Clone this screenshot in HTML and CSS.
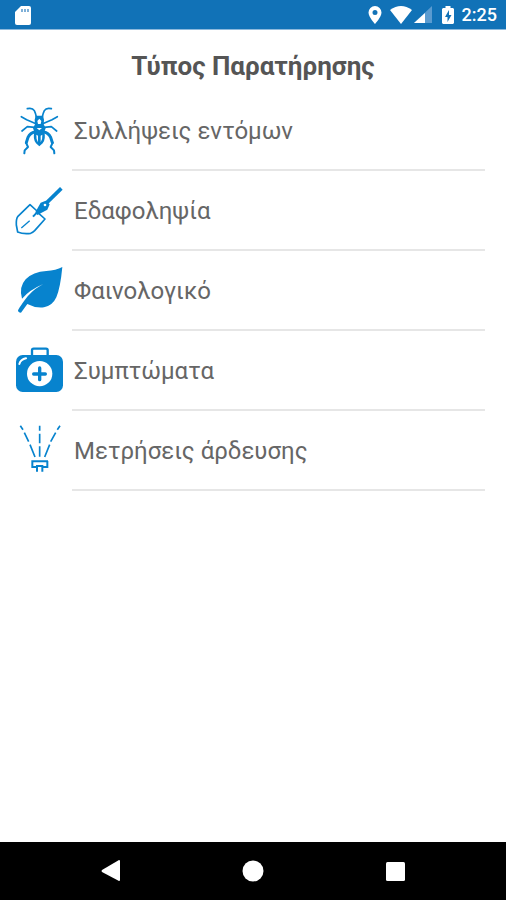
FILE: index.html
```html
<!DOCTYPE html>
<html lang="el">
<head>
<meta charset="utf-8">
<meta name="viewport" content="width=device-width, initial-scale=1">
<title>Τύπος Παρατήρησης</title>
<link rel="stylesheet" href="styles.css">
</head>
<body>
<header class="status">
  <svg class="sd" width="16" height="20" viewBox="0 0 16 20" aria-hidden="true"><path fill="#fff" d="M6 1h8a2 2 0 0 1 2 2v15a2 2 0 0 1-2 2H2a2 2 0 0 1-2-2V7z"/><path stroke="#7fb0d8" stroke-width="2" d="M7 4v3M10 4v3M13 4v3"/></svg>
  <div class="indicators">
    <svg width="14" height="18" viewBox="0 0 14 18" aria-hidden="true"><path fill="#fff" fill-rule="evenodd" d="M7 0a6.500 6.500 0 0 1 6.500 6.500C13.500 11 7 18 7 18S.5 11 .5 6.500A6.500 6.500 0 0 1 7 0zm0 4a2.500 2.500 0 1 0 0 5 2.500 2.500 0 0 0 0-5z"/></svg>
    <svg class="wifi" width="22" height="18" viewBox="0 0 22 18" aria-hidden="true"><path fill="#fff" d="M0 4Q11-4 22 4L11 18z"/></svg>
    <svg width="18" height="18" viewBox="0 0 18 18" aria-hidden="true"><path fill="#5a9bd0" d="M18 0v17H0z"/><path fill="#fff" d="M11 7v10H0z"/></svg>
    <svg class="battery" width="12" height="18" viewBox="0 0 12 18" aria-hidden="true"><path fill="#fff" d="M3.500 0h5v2H11l1 1v14l-1 1H1l-1-1V3l1-1h2.500z"/><path fill="#1172b7" d="M7 4L3 11h2.500v5L9.500 9H7z"/></svg>
    <time>2:25</time>
  </div>
</header>
<main>
  <h1>Τύπος Παρατήρησης</h1>
  <ul class="types">
    <li><a href="#insects">
      <svg class="icon" viewBox="48 36 144 144" aria-hidden="true">
        <g fill="none" stroke="#0783ce" stroke-width="5" stroke-linecap="round" stroke-linejoin="round">
          <path d="M82 41Q97 37 103 47Q107 55 109 66M154 41Q139 37 133 47Q129 55 127 66"/>
          <path d="M64 65L80 74L108 86M172 65L156 74L128 86M66 108L82 95L104 97M170 108L154 95L132 97"/>
          <path stroke-width="9" d="M104 111Q91 113 84 127L79 143M132 111Q145 113 152 127L157 143"/>
          <path stroke-width="6" d="M78 143L84 156L74 166L73 175M158 143L152 156L162 166L163 175"/>
        </g>
        <path fill="#0783ce" d="M107 62h22l3 12-1 14 6 12-4 10q5 22-5 35l-10 9-10-9q-10-13-5-35l-4-10 6-12-1-14z"/>
        <path fill="#fff" d="M118 71l6 7-2 9h-8l-2-9zM110 99h16l-8 7zM109 119l5 3v20q-6-8-5-23zM127 119l-5 3v20q6-8 5-23z"/>
      </svg><span>Συλλήψεις εντόμων</span></a></li>
    <li><a href="#soil">
      <svg class="icon" viewBox="48 36 144 144" aria-hidden="true">
        <path fill="none" stroke="#0783ce" stroke-width="5" stroke-linejoin="round" d="M111 108L90 89L53 125Q48 132 49 150L53 171Q70 178 92 175Q98 173 104 167L135 132L116 115"/>
        <path stroke="#0783ce" stroke-width="4" d="M64 159L89 137"/>
        <path stroke="#0783ce" stroke-width="11" d="M138 85L184 40"/>
        <path stroke="#0783ce" stroke-width="6" d="M99 125L120 103"/>
        <path fill="#0783ce" d="M106 112L122 83L137 77L149 88L142 104L112 120z"/>
        <circle cx="135" cy="90" r="4" fill="#fff"/>
      </svg><span>Εδαφοληψία</span></a></li>
    <li><a href="#phenology">
      <svg class="icon" viewBox="48 36 144 144" aria-hidden="true">
        <path fill="#0783ce" d="M187 36Q168 47 139 48Q99 50 77 73Q56 96 66 131Q88 105 130 87C102 103 84 116 54 166Q54 173 63 173L82 147Q106 160 132 157Q158 152 169 127Q181 99 187 36z"/>
      </svg><span>Φαινολογικό</span></a></li>
    <li><a href="#symptoms">
      <svg class="icon" viewBox="48 36 144 144" aria-hidden="true">
        <rect x="48" y="60" width="141" height="111" rx="20" fill="#0783ce"/>
        <path fill="none" stroke="#0783ce" stroke-width="7" d="M96 63V46q0-5 5-5h37q5 0 5 5v17"/>
        <circle cx="119" cy="116" r="38" fill="#fff"/>
        <path stroke="#0783ce" stroke-width="10" stroke-linecap="round" d="M119 99v35M101 117h35"/>
        <path fill="none" stroke="#fff" stroke-width="6" stroke-linecap="round" d="M58 87q4-14 20-17"/>
      </svg><span>Συμπτώματα</span></a></li>
    <li><a href="#irrigation">
      <svg class="icon" viewBox="48 36 144 144" aria-hidden="true">
        <g fill="none" stroke="#0783ce" stroke-width="5">
          <path d="M61 32l8 12M73 53l13 27M90 89l15 37M119 32v15M119 56v29M119 94v31M180 32l-8 12M167 53l-15 27M149 89l-15 37"/>
          <path stroke-width="6" d="M94 139h50M97 138v18h14v14M142 138v18h-15v14M108 153h22"/>
        </g>
      </svg><span>Μετρήσεις άρδευσης</span></a></li>
  </ul>
</main>
<nav class="system" aria-label="Σύστημα">
  <button type="button" aria-label="Πίσω"><svg width="22" height="22" viewBox="0 0 22 22"><path fill="#fff" d="M20 1v19q0 1-1 1L2 12q-1-1 0-2L19 0q1 0 1 1z"/></svg></button>
  <button type="button" aria-label="Αρχική"><svg width="22" height="22" viewBox="0 0 22 22"><circle cx="11" cy="11" r="10.500" fill="#fff"/></svg></button>
  <button type="button" aria-label="Πρόσφατα"><svg width="22" height="22" viewBox="0 0 22 22"><rect x="2" y="2" width="19" height="19" rx="1.500" fill="#fff"/></svg></button>
</nav>
</body>
</html>
```
FILE: styles.css
```css
* {
  box-sizing: border-box;
}

body {
  margin: 0;
  min-height: 100vh;
  display: flex;
  flex-direction: column;
  background: #fff;
  color: #666;
  font-family: Roboto, "Noto Sans", sans-serif;
}

svg {
  display: block;
}

.status {
  display: flex;
  align-items: center;
  justify-content: space-between;
  height: 30px;
  padding: 0 9px 0 15px;
  background: #1172b7;
  border-bottom: 1px solid #8db9dc;
  color: #fff;
}

.indicators {
  display: flex;
  align-items: center;
  gap: 8px;
}

.wifi {
  margin-right: -6px;
}

.battery {
  margin-left: 2px;
}

time {
  font-size: 18px;
  font-weight: 500;
  line-height: 24px;
}

main {
  flex: 1;
}

h1 {
  margin: 0;
  padding-top: 20px;
  height: 61px;
  text-align: center;
  font-size: 26px;
  font-weight: 700;
  line-height: 32px;
  color: #555;
}

.types {
  margin: 0;
  padding: 0 21px 0 16px;
  list-style: none;
}

.types a {
  display: flex;
  align-items: stretch;
  height: 80px;
  color: inherit;
  text-decoration: none;
}

.icon {
  flex: none;
  align-self: center;
  width: 48px;
  height: 48px;
  margin-right: 8px;
  overflow: visible;
}

.types span {
  flex: 1;
  padding: 24px 0 0 2px;
  border-bottom: 2px solid #e6e6e6;
  font-size: 24px;
  line-height: 32px;
}

.system {
  display: flex;
  height: 58px;
  padding: 0 8%;
  background: #000;
}

.system button {
  flex: 1;
  display: flex;
  align-items: center;
  justify-content: center;
  padding: 0;
  border: 0;
  background: none;
}
```
